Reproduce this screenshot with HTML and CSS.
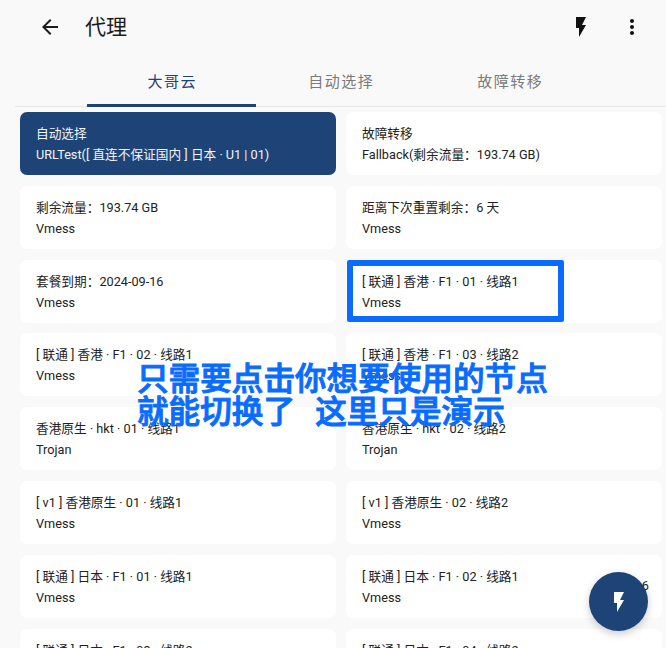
FILE: index.html
```html
<!DOCTYPE html>
<html lang="zh-CN">
<head>
    <meta charset="UTF-8">
    <meta name="viewport" content="width=device-width, initial-scale=1.0">
    <title>代理</title>
    <link rel="stylesheet" href="styles.css">
</head>
<body>
    <div class="app-bar">
        <svg class="back-icon" viewBox="0 0 24 24"><path d="M20 11H7.83l5.59-5.59L12 4l-8 8 8 8 1.41-1.41L7.83 13H20v-2z"/></svg>
        <h1>代理</h1>
        <div class="actions">
            <svg class="bolt-icon" viewBox="0 0 24 24"><path d="M7 2v11h3v9l7-12h-4l4-8z"/></svg>
            <svg class="more-icon" viewBox="0 0 24 24"><path d="M12 8c1.1 0 2-.9 2-2s-.9-2-2-2-2 .9-2 2 .9 2 2 2zm0 2c-1.1 0-2 .9-2 2s.9 2 2 2 2-.9 2-2-.9-2-2-2zm0 6c-1.1 0-2 .9-2 2s.9 2 2 2 2-.9 2-2-.9-2-2-2z"/></svg>
        </div>
    </div>

    <div class="tabs">
        <div class="tab active-tab">大哥云</div>
        <div class="tab">自动选择</div>
        <div class="tab">故障转移</div>
    </div>

    <div class="proxy-grid">
        <div class="card selected"><p>自动选择</p><p>URLTest([ 直连不保证国内 ] 日本 · U1 | 01)</p></div>
        <div class="card"><p>故障转移</p><p>Fallback(剩余流量：193.74 GB)</p></div>
        <div class="card"><p>剩余流量：193.74 GB</p><p>Vmess</p></div>
        <div class="card"><p>距离下次重置剩余：6 天</p><p>Vmess</p></div>
        <div class="card"><p>套餐到期：2024-09-16</p><p>Vmess</p></div>
        <div class="card"><p>[ 联通 ] 香港 · F1 · 01 · 线路1</p><p>Vmess</p></div>
        <div class="card"><p>[ 联通 ] 香港 · F1 · 02 · 线路1</p><p>Vmess</p></div>
        <div class="card"><p>[ 联通 ] 香港 · F1 · 03 · 线路2</p><p>Vmess</p></div>
        <div class="card"><p>香港原生 · hkt · 01 · 线路1</p><p>Trojan</p></div>
        <div class="card"><p>香港原生 · hkt · 02 · 线路2</p><p>Trojan</p></div>
        <div class="card"><p>[ v1 ] 香港原生 · 01 · 线路1</p><p>Vmess</p></div>
        <div class="card"><p>[ v1 ] 香港原生 · 02 · 线路2</p><p>Vmess</p></div>
        <div class="card"><p>[ 联通 ] 日本 · F1 · 01 · 线路1</p><p>Vmess</p></div>
        <div class="card"><p>[ 联通 ] 日本 · F1 · 02 · 线路1</p><p>Vmess</p><span class="delay">6</span></div>
        <div class="card"><p>[ 联通 ] 日本 · F1 · 03 · 线路2</p><p>Vmess</p></div>
        <div class="card"><p>[ 联通 ] 日本 · F1 · 04 · 线路2</p><p>Vmess</p></div>
    </div>

    <!-- annotations drawn over the screenshot -->
    <div class="highlight-box"></div>
    <div class="note">只需要点击你想要使用的节点<br>就能切换了 &nbsp;这里只是演示</div>

    <div class="fab">
        <svg viewBox="0 0 24 24"><path d="M7 2v11h3v9l7-12h-4l4-8z"/></svg>
    </div>
</body>
</html>
```

FILE: styles.css
```css
html, body {
    height: 100%;
}
body {
    font-family: Roboto, "Noto Sans CJK SC", sans-serif;
    margin: 0;
    background-color: #f9f9f9;
    color: #222;
    overflow: hidden;
    position: relative;
}
p {
    margin: 0;
}
.app-bar {
    display: flex;
    align-items: center;
    height: 53px;
    padding: 0 22px 0 38px;
}
.app-bar h1 {
    margin: -3px 0 0 23px;
    font-size: 21px;
    font-weight: 400;
    color: #1c1c1c;
}
.back-icon {
    width: 24px;
    height: 24px;
    fill: #1c1c1c;
}
.actions {
    margin-left: auto;
    display: flex;
    align-items: center;
    gap: 27px;
}
.bolt-icon, .more-icon {
    width: 24px;
    height: 24px;
    fill: #111;
}
.tabs {
    display: flex;
    height: 54px;
    margin-left: 15px;
    padding-left: 72px;
    border-bottom: 1px solid #e6e6e6;
    box-sizing: border-box;
}
.tab {
    width: 169px;
    text-align: center;
    font-size: 15px;
    letter-spacing: 1.5px;
    text-indent: 1.5px;
    line-height: 58px;
    color: #7b7b7b;
    box-sizing: border-box;
    height: 54px;
}
.tab.active-tab {
    color: #1e4477;
    border-bottom: 3px solid #1e4477;
}
.proxy-grid {
    display: grid;
    grid-template-columns: 316px 316px;
    grid-auto-rows: 63px;
    gap: 10.8px 10px;
    padding: 5px 0 0 20px;
}
.card {
    background: white;
    border-radius: 7px;
    padding: 11px 16px 0;
    box-sizing: border-box;
    font-size: 12.7px;
    line-height: 21px;
    color: #222;
    white-space: nowrap;
    overflow: hidden;
    position: relative;
}
.card.selected {
    background-color: #1e4477;
    color: #f2f4f8;
}
.delay {
    position: absolute;
    right: 13px;
    top: 20px;
}
.highlight-box {
    position: absolute;
    left: 347px;
    top: 260px;
    width: 205px;
    height: 50px;
    border: 6px solid #0a6cff;
    border-radius: 2px;
}
.note {
    position: absolute;
    left: 137px;
    top: 360px;
    font-family: "Noto Sans CJK SC", sans-serif;
    font-size: 31.6px;
    line-height: 33px;
    font-weight: 500;
    -webkit-text-stroke: 1px #0a6cff;
    word-spacing: 3px;
    color: #0a6cff;
    white-space: nowrap;
}
.fab {
    position: absolute;
    left: 589px;
    top: 572px;
    width: 59px;
    height: 59px;
    border-radius: 50%;
    background-color: #1e4477;
    box-shadow: 0 3px 8px rgba(0, 0, 0, 0.2);
    display: flex;
    align-items: center;
    justify-content: center;
}
.fab svg {
    width: 24px;
    height: 24px;
    fill: white;
}
```
